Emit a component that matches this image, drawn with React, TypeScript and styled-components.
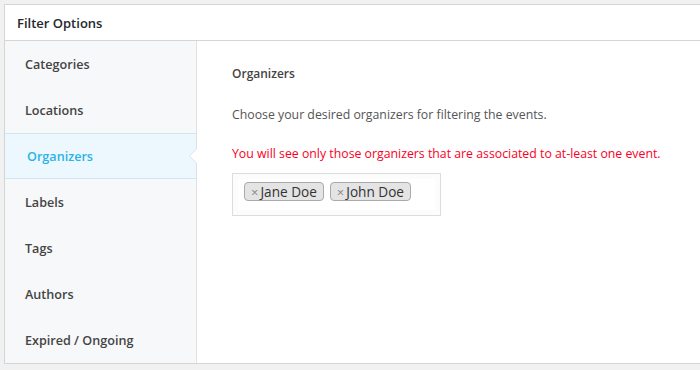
import React from "react";
import styled, { createGlobalStyle } from "styled-components";

const Global = createGlobalStyle`
  html, body { margin: 0; padding: 0; background: #f1f1f1; }
  body { font-family: "Open Sans", "Noto Sans", sans-serif; -webkit-font-smoothing: antialiased; }
  * { box-sizing: border-box; }
`;

const Page = styled.div`
  width: 700px;
  height: 370px;
  padding: 4px 0 0 4px;
  overflow: hidden;
`;

const Panel = styled.div`
  width: 700px;
  height: 360px;
  background: #fff;
  border: 1px solid #d5d5d5;
  border-right: none;
  display: flex;
  flex-direction: column;
`;

const Header = styled.div`
  height: 37px;
  border-bottom: 1px solid #d5d5d5;
  display: flex;
  align-items: center;
  padding-left: 12px;
  font-size: 13px;
  font-weight: 600;
  color: #23282d;
`;

const Body = styled.div`
  flex: 1;
  display: flex;
`;

const Sidebar = styled.ul`
  list-style: none;
  margin: 0;
  padding: 0;
  width: 192px;
  background: #f7f8f9;
  border-right: 1px solid #e1e1e1;
`;

const Item = styled.li<{ $active?: boolean }>`
  position: relative;
  height: 46px;
  display: flex;
  align-items: center;
  padding-left: ${(p) => (p.$active ? "22px" : "20px")};
  font-size: 12.6px;
  font-weight: 600;
  color: ${(p) => (p.$active ? "#2bb3e6" : "#444")};
  background: ${(p) => (p.$active ? "#ecf8fd" : "transparent")};
  border-top: 1px solid ${(p) => (p.$active ? "#cfe9f4" : "transparent")};
  border-bottom: 1px solid ${(p) => (p.$active ? "#cfe9f4" : "transparent")};
`;

const Arrow = styled.span`
  position: absolute;
  right: -1px;
  top: 50%;
  margin-top: -8px;
  width: 0;
  height: 0;
  border-top: 8px solid transparent;
  border-bottom: 8px solid transparent;
  border-right: 8px solid #e1e1e1;
  &::after {
    content: "";
    position: absolute;
    top: -7px;
    left: 1px;
    border-top: 7px solid transparent;
    border-bottom: 7px solid transparent;
    border-right: 7px solid #fff;
  }
`;

const Content = styled.div`
  flex: 1;
  padding: 24px 0 0 35px;
  color: #555;
`;

const Title = styled.h4`
  margin: 0;
  font-size: 12px;
  font-weight: 600;
  color: #444;
  line-height: 18px;
`;

const Desc = styled.p`
  margin: 23px 0 0;
  font-size: 12.3px;
  line-height: 18px;
  color: #555;
`;

const Warn = styled.p`
  margin: 21px 0 0;
  font-size: 12.3px;
  line-height: 18px;
  color: #fa0025;
`;

const Select = styled.div`
  margin-top: 10px;
  width: 209px;
  height: 43px;
  border: 1px solid #ddd;
  background: #fff;
  padding: 7px 11px;
  display: flex;
  align-items: flex-start;
  gap: 6px;
  box-shadow: inset 0 0 0 5px #fcfcfc;
`;

const Tag = styled.span`
  display: inline-flex;
  align-items: center;
  height: 19px;
  margin-top: 1px;
  padding: 0 6px 0 6px;
  background: #e4e4e4;
  border: 1px solid #aaa;
  border-radius: 4px;
  font-size: 13.6px;
  color: #333;
`;

const Remove = styled.span`
  color: #888;
  font-size: 13px;
  margin-right: 2px;
`;

const items = ["Categories", "Locations", "Organizers", "Labels", "Tags", "Authors", "Expired / Ongoing"];

export default function App() {
  return (
    <>
      <Global />
      <Page>
        <Panel>
          <Header>Filter Options</Header>
          <Body>
            <Sidebar>
              {items.map((it) => (
                <Item key={it} $active={it === "Organizers"}>
                  {it}
                  {it === "Organizers" && <Arrow />}
                </Item>
              ))}
            </Sidebar>
            <Content>
              <Title>Organizers</Title>
              <Desc>Choose your desired organizers for filtering the events.</Desc>
              <Warn>You will see only those organizers that are associated to at-least one event.</Warn>
              <Select>
                <Tag><Remove>×</Remove>Jane Doe</Tag>
                <Tag><Remove>×</Remove>John Doe</Tag>
              </Select>
            </Content>
          </Body>
        </Panel>
      </Page>
    </>
  );
}
